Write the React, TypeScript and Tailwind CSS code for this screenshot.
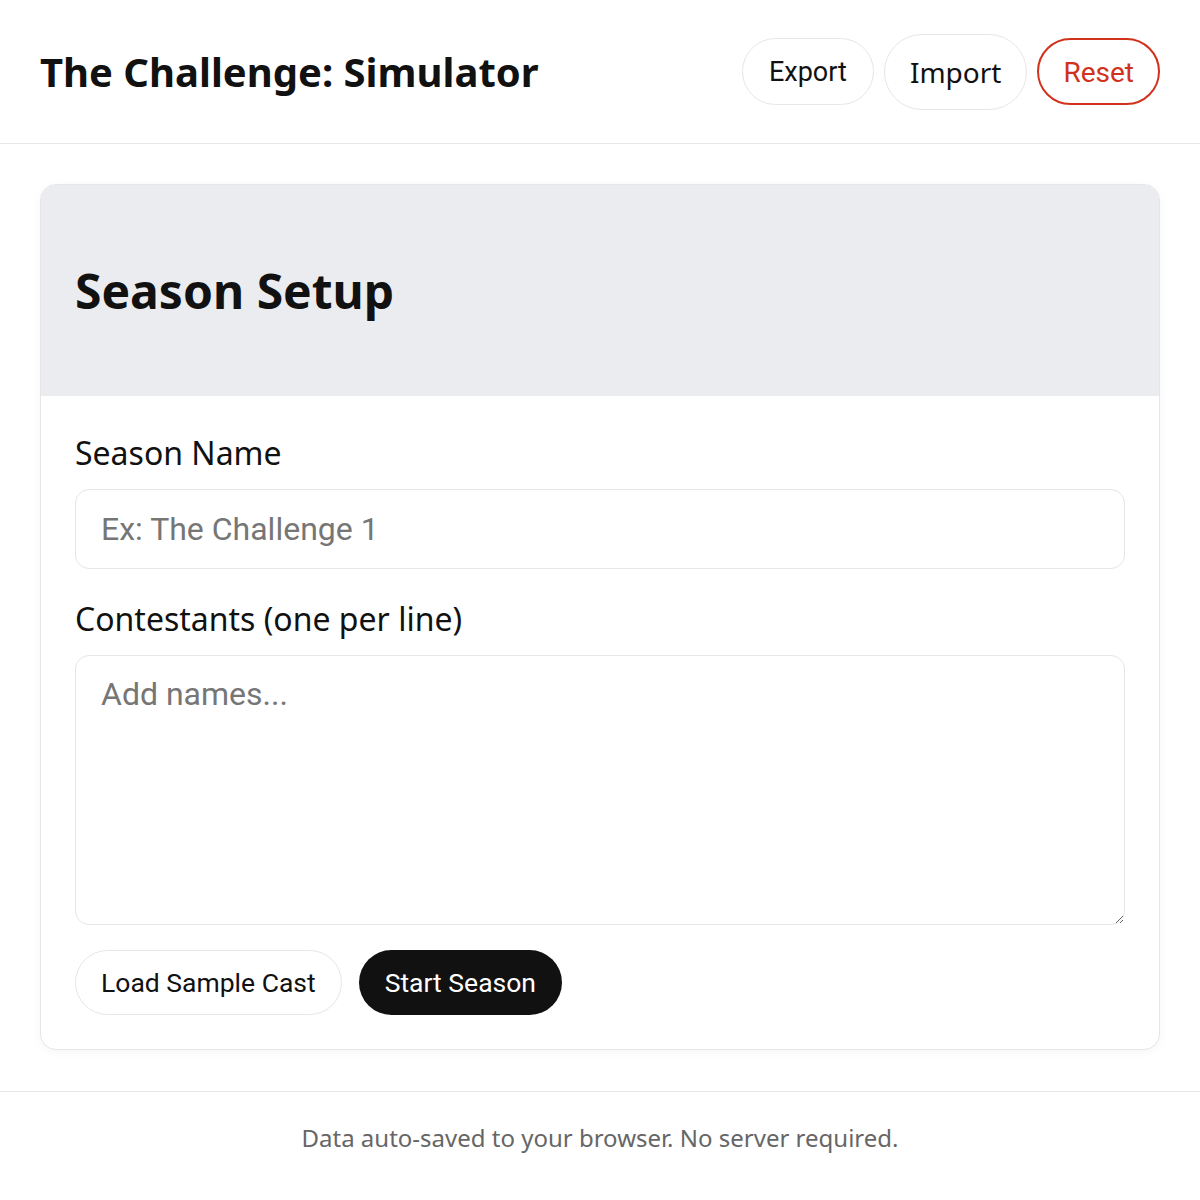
export default function App() {
  const sans = "font-['Noto_Sans','Liberation_Sans',sans-serif]";
  const roboto = "font-['Roboto','Liberation_Sans',sans-serif]";
  return (
    <div className={`min-h-screen bg-white text-[#111] ${sans}`}>
      {/* header */}
      <header className="flex h-[144px] items-center justify-between border-b border-[#e6e6e6] px-10">
        <h1 className="text-[40px] font-bold leading-none">The Challenge: Simulator</h1>
        <div className="flex items-center gap-[10px]">
          <button className={`h-[67px] rounded-full border border-[#e6e6e6] bg-white px-[26px] pt-[2px] text-[27px] ${roboto}`}>Export</button>
          <button className={`h-[76px] rounded-full border border-[#e6e6e6] bg-white px-[25px] text-[28px] ${sans}`}>Import</button>
          <button className={`h-[67px] rounded-full border-2 border-[#d0321c] bg-white px-[24px] pt-[2px] text-[28px] text-[#d0321c] ${roboto}`}>Reset</button>
        </div>
      </header>

      <main className="px-10 pt-10">
        <section className="overflow-hidden rounded-[16px] border border-[#e6e6e6] bg-white shadow-[0_2px_10px_rgba(0,0,0,0.04)]">
          <div className="flex h-[211px] items-center bg-[#ebecef] px-[34px]">
            <h2 className="text-[48px] font-bold leading-none">Season Setup</h2>
          </div>
          <div className="flex flex-col px-[34px] pt-[36px] pb-[34px]">
            <label className="mb-[15px] text-[32px] leading-[42px]">Season Name</label>
            <input
              className={`h-[80px] w-full rounded-[14px] border border-[#e6e6e6] px-[25px] text-[32px] outline-none placeholder:text-[#767676] ${roboto}`}
              placeholder="Ex: The Challenge 1"
            />
            <label className="mt-[29px] mb-[15px] text-[32px] leading-[42px]">Contestants (one per line)</label>
            <textarea
              className={`h-[270px] w-full rounded-[14px] border border-[#e6e6e6] px-[25px] py-[18px] text-[32px] leading-[1.3] outline-none placeholder:text-[#767676] ${roboto}`}
              placeholder="Add names..."
            />
            <div className="mt-[25px] flex gap-[17px]">
              <button className={`h-[65px] rounded-full border border-[#e6e6e6] bg-white px-[25px] text-[26.5px] ${roboto}`}>Load Sample Cast</button>
              <button className={`h-[65px] rounded-full bg-[#111] px-[26px] text-[26.5px] text-white ${roboto}`}>Start Season</button>
            </div>
          </div>
        </section>
      </main>

      <footer className="mt-[41px] flex h-[92px] items-center justify-center border-t border-[#e6e6e6]">
        <p className="text-[24px] text-[#666]">Data auto-saved to your browser. No server required.</p>
      </footer>
    </div>
  );
}
